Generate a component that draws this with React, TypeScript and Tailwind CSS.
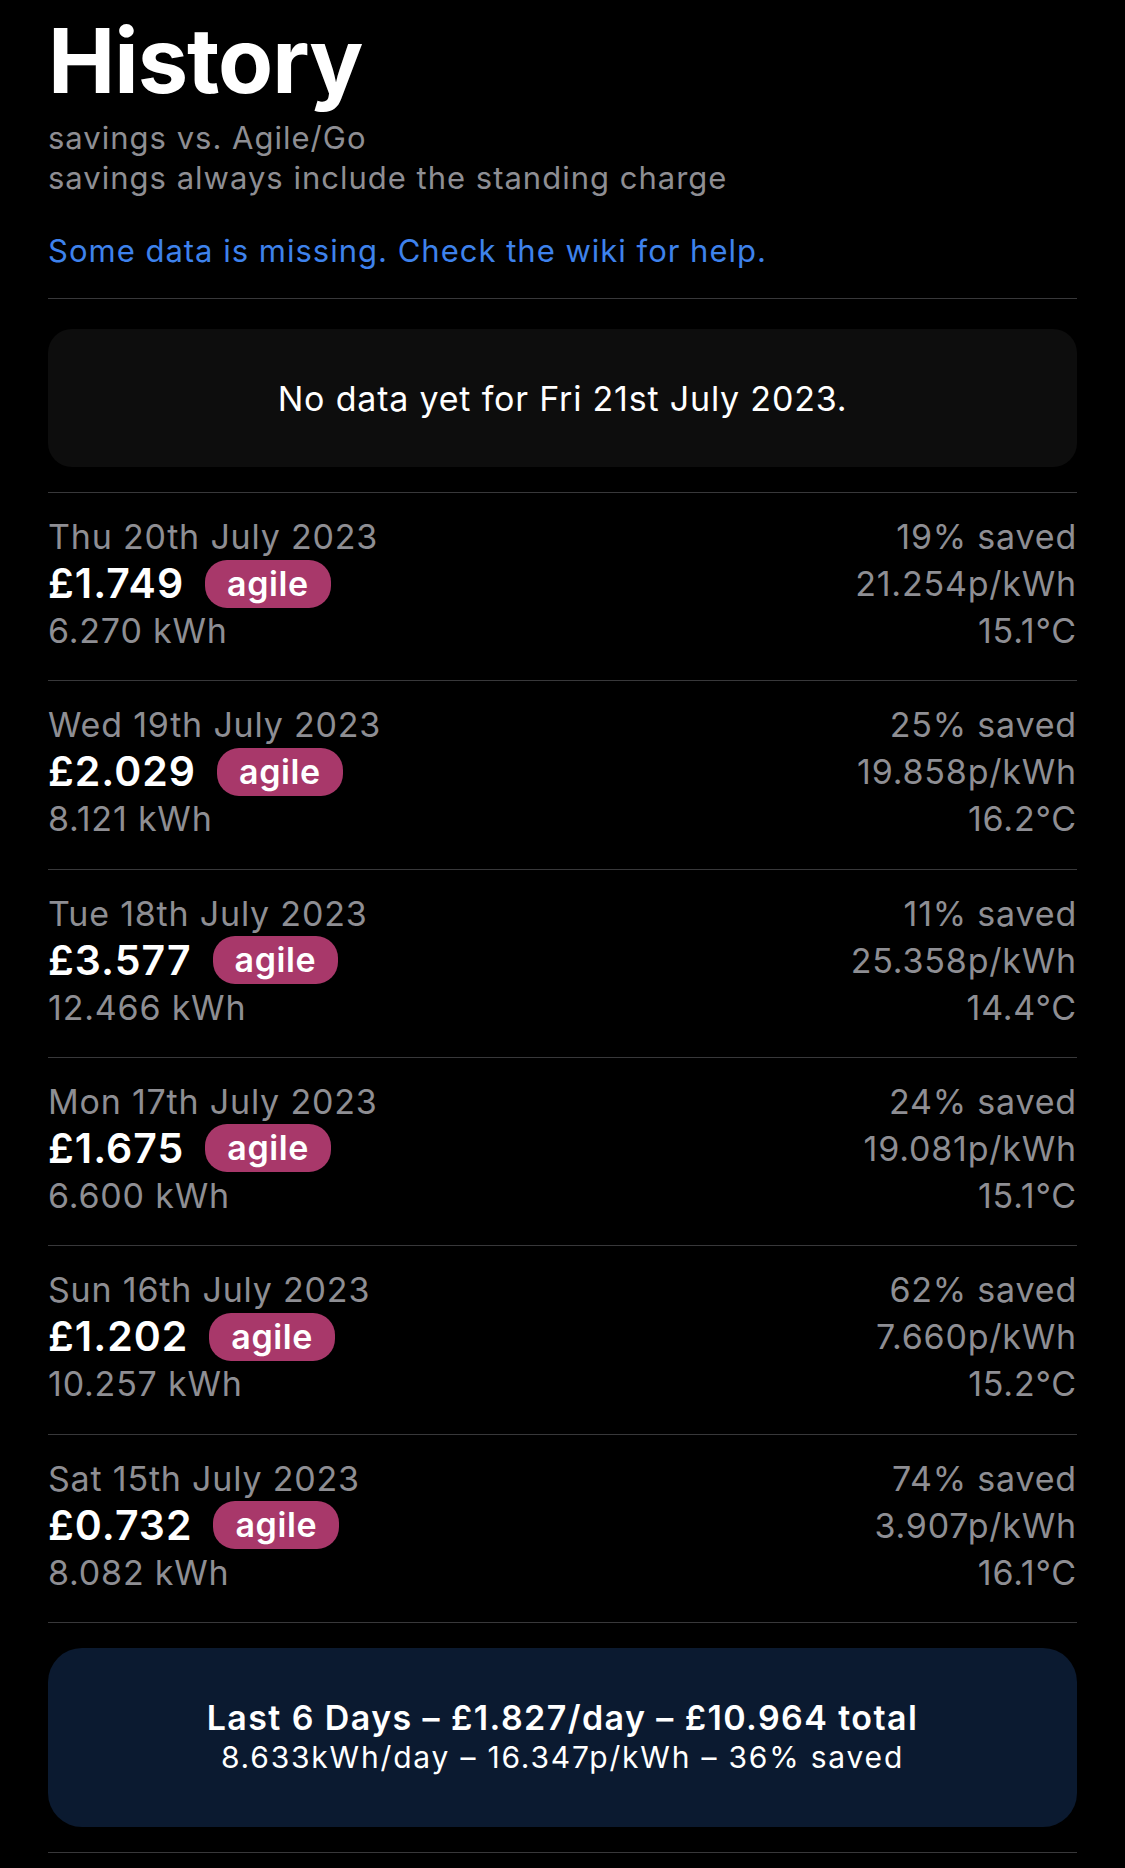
import * as React from 'react';

type Day = {
  date: string;
  cost: string;
  kwh: string;
  saved: string;
  rate: string;
  temp: string;
};

const days: Day[] = [
  { date: 'Thu 20th July 2023', cost: '£1.749', kwh: '6.270 kWh', saved: '19% saved', rate: '21.254p/kWh', temp: '15.1°C' },
  { date: 'Wed 19th July 2023', cost: '£2.029', kwh: '8.121 kWh', saved: '25% saved', rate: '19.858p/kWh', temp: '16.2°C' },
  { date: 'Tue 18th July 2023', cost: '£3.577', kwh: '12.466 kWh', saved: '11% saved', rate: '25.358p/kWh', temp: '14.4°C' },
  { date: 'Mon 17th July 2023', cost: '£1.675', kwh: '6.600 kWh', saved: '24% saved', rate: '19.081p/kWh', temp: '15.1°C' },
  { date: 'Sun 16th July 2023', cost: '£1.202', kwh: '10.257 kWh', saved: '62% saved', rate: '7.660p/kWh', temp: '15.2°C' },
  { date: 'Sat 15th July 2023', cost: '£0.732', kwh: '8.082 kWh', saved: '74% saved', rate: '3.907p/kWh', temp: '16.1°C' },
];

function Divider() {
  return <div className="h-px w-full bg-[#38383a]" />;
}

function DayRow({ day }: { day: Day }) {
  return (
    <div className="flex h-[188.33px] justify-between border-b border-[#38383a] pt-[20px]">
      <div className="flex flex-col">
        <div className="h-[47px] text-[34px] leading-[47px] tracking-[0.8px] text-[#8e8e93]">{day.date}</div>
        <div className="flex h-[47px] items-center gap-[21px]">
          <span className="text-[41px] font-semibold leading-[47px] tracking-[1px] text-white">{day.cost}</span>
          <span className="h-[48px] rounded-[22px] bg-[#a8386a] px-[22px] text-[34px] font-semibold leading-[47px] tracking-[0.6px] text-white">
            agile
          </span>
        </div>
        <div className="h-[47px] text-[34px] leading-[47px] tracking-[0.8px] text-[#8e8e93]">{day.kwh}</div>
      </div>
      <div className="flex flex-col items-end text-[34px] leading-[47px] tracking-[0.8px] text-[#8e8e93]">
        <div className="h-[47px]">{day.saved}</div>
        <div className="h-[47px]">{day.rate}</div>
        <div className="h-[47px]">{day.temp}</div>
      </div>
    </div>
  );
}

export default function App() {
  return (
    <div className="min-h-[1868px] w-full bg-black px-12 [font-family:Inter,'Noto_Sans',sans-serif] antialiased">
      <h1 className="pt-4 text-[90px] font-bold leading-none tracking-[-1px] text-white">History</h1>
      <div className="mt-[12px] text-[31px] leading-[40px] tracking-[1px] text-[#8e8e93]">
        <div>savings vs. Agile/Go</div>
        <div>savings always include the standing charge</div>
      </div>
      <div className="mt-[33px] mb-[27px] text-[31px] leading-[40px] tracking-[1px] text-[#3e82ec]">
        Some data is missing. Check the wiki for help.
      </div>
      <Divider />

      <div className="mt-[30px] mb-[25px] flex h-[138px] items-center justify-center rounded-[24px] bg-[#0d0d0d] text-[34px] tracking-[0.8px] text-white">
        No data yet for Fri 21st July 2023.
      </div>
      <Divider />

      {days.map((d) => (
        <DayRow key={d.date} day={d} />
      ))}

      <div className="mt-[25px] mb-[25px] flex h-[179px] flex-col items-center justify-center rounded-[34px] bg-[#0b1a30] text-white">
        <div className="text-[34px] font-semibold leading-[40px] tracking-[1.4px]">Last 6 Days – £1.827/day – £10.964 total</div>
        <div className="text-[30px] leading-[38px] tracking-[1.8px]">8.633kWh/day – 16.347p/kWh – 36% saved</div>
      </div>
      <Divider />
    </div>
  );
}
